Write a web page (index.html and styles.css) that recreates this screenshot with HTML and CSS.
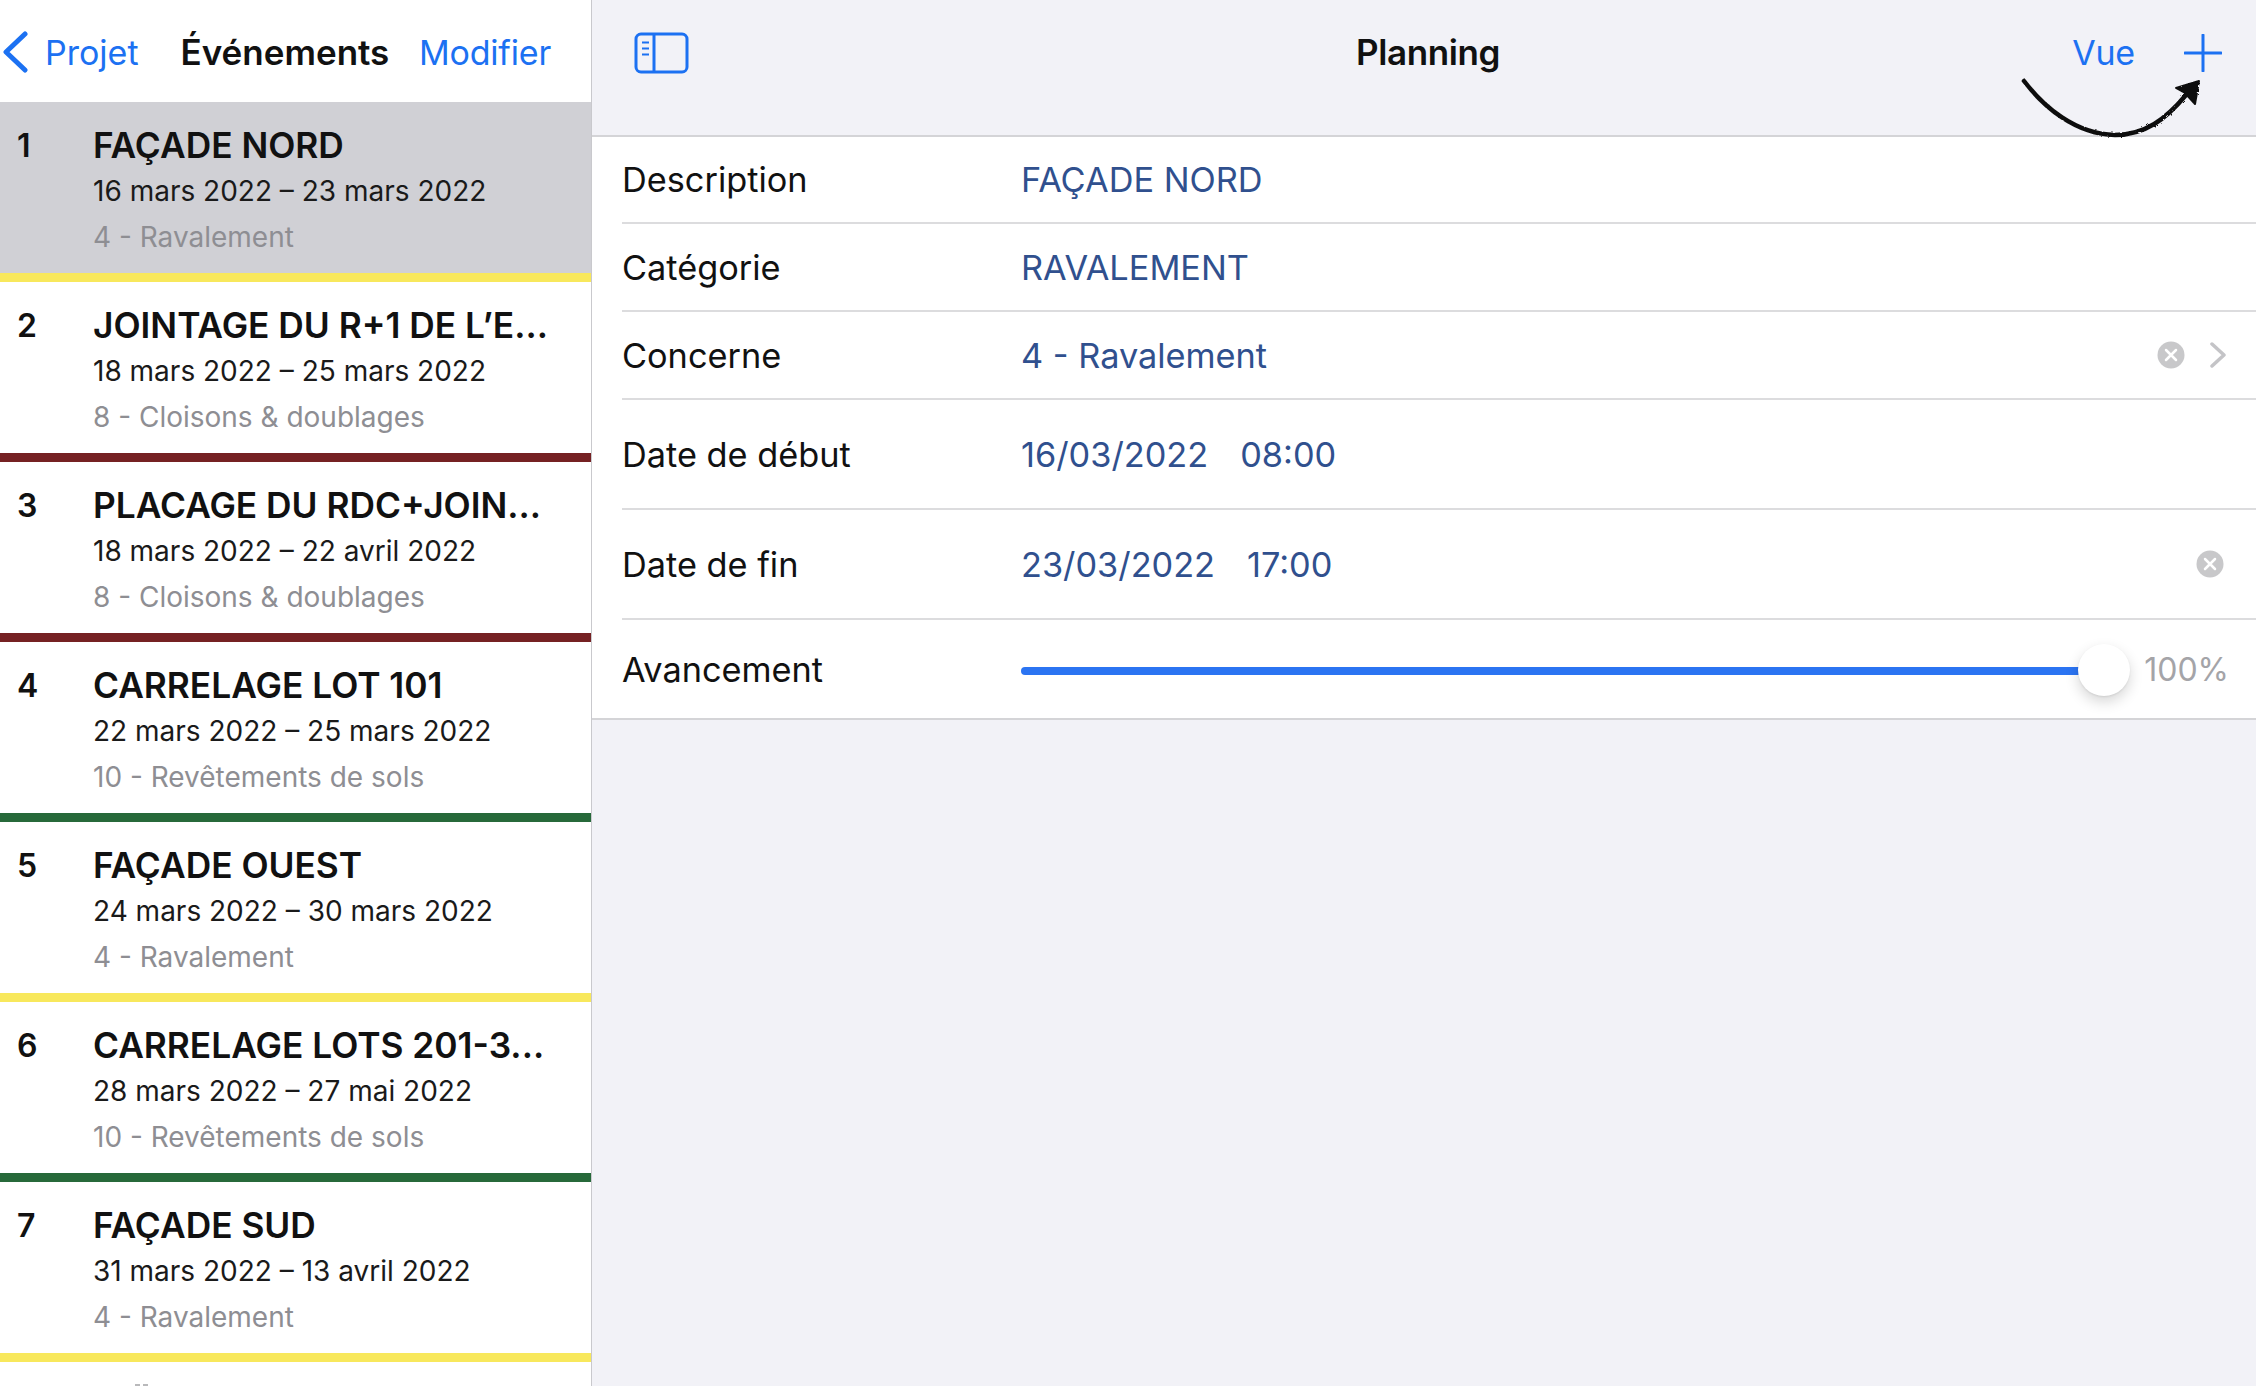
FILE: index.html
```html
<!DOCTYPE html>
<html lang="fr">
<head>
<meta charset="utf-8">
<title>Planning</title>
<link rel="stylesheet" href="styles.css">
</head>
<body>
<div class="app">
  <aside class="sidebar">
    <header class="side-head">
      <a class="back">
        <svg class="chev" width="28" height="42" viewBox="0 0 28 42"><path d="M25 3 L6 21 L25 39" fill="none" stroke="#1c71f2" stroke-width="5" stroke-linecap="round" stroke-linejoin="round"/></svg>
        <span>Projet</span>
      </a>
      <h1 class="side-title">Événements</h1>
      <a class="link">Modifier</a>
    </header>
    <ul class="events">
      <li class="event selected yellow"><span class="num">1</span><div class="info"><div class="name">FAÇADE NORD</div><div class="dates">16 mars 2022 – 23 mars 2022</div><div class="cat">4 - Ravalement</div></div></li>
      <li class="event maroon"><span class="num">2</span><div class="info"><div class="name">JOINTAGE DU R+1 DE L’E...</div><div class="dates">18 mars 2022 – 25 mars 2022</div><div class="cat">8 - Cloisons &amp; doublages</div></div></li>
      <li class="event maroon"><span class="num">3</span><div class="info"><div class="name">PLACAGE DU RDC+JOIN...</div><div class="dates">18 mars 2022 – 22 avril 2022</div><div class="cat">8 - Cloisons &amp; doublages</div></div></li>
      <li class="event green"><span class="num">4</span><div class="info"><div class="name">CARRELAGE LOT 101</div><div class="dates">22 mars 2022 – 25 mars 2022</div><div class="cat">10 - Revêtements de sols</div></div></li>
      <li class="event yellow"><span class="num">5</span><div class="info"><div class="name">FAÇADE OUEST</div><div class="dates">24 mars 2022 – 30 mars 2022</div><div class="cat">4 - Ravalement</div></div></li>
      <li class="event green"><span class="num">6</span><div class="info"><div class="name">CARRELAGE LOTS 201-3...</div><div class="dates">28 mars 2022 – 27 mai 2022</div><div class="cat">10 - Revêtements de sols</div></div></li>
      <li class="event yellow"><span class="num">7</span><div class="info"><div class="name">FAÇADE SUD</div><div class="dates">31 mars 2022 – 13 avril 2022</div><div class="cat">4 - Ravalement</div></div></li>
      <li class="peek"><span class="peek-dot"></span><span class="peek-dot"></span></li>
    </ul>
  </aside>
  <main class="detail">
    <header class="main-head">
      <svg class="side-icon" width="56" height="42" viewBox="0 0 56 42"><rect x="2" y="2" width="51" height="38" rx="5" fill="none" stroke="#1c71f2" stroke-width="3"/><path d="M20 2V40" stroke="#1c71f2" stroke-width="3"/><path d="M8 10.5h7M8 16.500h7M8 22.500h7" stroke="#1c71f2" stroke-width="2"/></svg>
      <h2 class="main-title">Planning</h2>
      <div class="actions">
        <a class="link">Vue</a>
        <svg class="plus" width="38" height="38" viewBox="0 0 38 38"><path d="M19 1V37M1 19H37" stroke="#1c71f2" stroke-width="3" stroke-linecap="round"/></svg>
      </div>
      <svg class="arrow" width="190" height="72" viewBox="0 0 190 72">
        <defs><filter id="rough" x="-5%" y="-10%" width="110%" height="120%"><feTurbulence type="fractalNoise" baseFrequency="0.35" numOctaves="2" seed="4"/><feDisplacementMap in="SourceGraphic" scale="2.500"/></filter></defs>
        <g filter="url(#rough)"><path d="M4 4 C24 30 55 57 95 58 C125 58 146 42 166 18" fill="none" stroke="#111" stroke-width="4.500" stroke-linecap="round"/><path d="M179 4 L156 11 L165 16 L175 27 Z" fill="#111" stroke="#111" stroke-width="2" stroke-linejoin="round"/></g>
      </svg>
    </header>
    <section class="form">
      <div class="row r-f"><span class="label">Description</span><span class="value">FAÇADE NORD</span></div>
      <div class="row r-s"><span class="label">Catégorie</span><span class="value">RAVALEMENT</span></div>
      <div class="row r-s"><span class="label">Concerne</span><span class="value">4 - Ravalement</span>
        <svg class="clear" width="28" height="28" viewBox="0 0 28 28"><circle cx="14" cy="14" r="13.500" fill="#c8c8ca"/><path d="M9 9L19 19M19 9L9 19" stroke="#fff" stroke-width="2.500" stroke-linecap="round"/></svg>
        <svg class="go" width="18" height="26" viewBox="0 0 18 26"><path d="M3 2L15 13L3 24" fill="none" stroke="#c4c4c7" stroke-width="3.500" stroke-linecap="round" stroke-linejoin="round"/></svg>
      </div>
      <div class="row r-l"><span class="label">Date de début</span><span class="value dates-val"><span>16/03/2022</span><span>08:00</span></span></div>
      <div class="row r-l"><span class="label">Date de fin</span><span class="value dates-val"><span>23/03/2022</span><span>17:00</span></span>
        <svg class="clear end" width="28" height="28" viewBox="0 0 28 28"><circle cx="14" cy="14" r="13.500" fill="#c8c8ca"/><path d="M9 9L19 19M19 9L9 19" stroke="#fff" stroke-width="2.500" stroke-linecap="round"/></svg>
      </div>
      <div class="row r-m last"><span class="label">Avancement</span>
        <div class="slider"><div class="track"></div><div class="knob"></div></div>
        <span class="pct">100%</span>
      </div>
    </section>
  </main>
</div>
</body>
</html>
```

FILE: styles.css
```css
* { box-sizing: border-box; }
html, body { margin: 0; padding: 0; height: 100%; overflow: hidden; }
body { font-family: Inter, "Liberation Sans", sans-serif; color: #111; background: #f2f2f7; }
.app { display: flex; width: 2256px; height: 1386px; overflow: hidden; }

.sidebar { width: 592px; flex: none; background: #fff; border-right: 1px solid #c9c9cd; overflow: hidden; }
.side-head { height: 102px; display: flex; align-items: center; padding: 2px 40px 0 0; }
.back { display: flex; align-items: center; gap: 17px; font-size: 34px; color: #1c71f2; }
.chev { display: block; }
.side-title { margin: 0 0 0 42px; font-size: 35px; font-weight: 600; color: #111; }
.link { font-size: 34px; color: #1c71f2; letter-spacing: -0.2px; }
.side-head .link { margin-left: auto; }

.events { list-style: none; margin: 0; padding: 0; }
.event { height: 180px; display: flex; background: #fff; border-bottom: 9px solid transparent; }
.event.selected { background: #d0d0d5; }
.event.yellow { border-bottom-color: #f8e85c; }
.event.maroon { border-bottom-color: #752123; }
.event.green { border-bottom-color: #27693a; }
.num { width: 93px; flex: none; padding: 24px 0 0 17px; font-size: 32px; line-height: 40px; font-weight: 600; }
.info { padding-top: 22px; min-width: 0; }
.name { font-size: 35.300px; line-height: 44px; font-weight: 600; white-space: nowrap; }
.dates { margin-top: 3px; font-size: 28px; line-height: 40px; white-space: nowrap; color: #1a1a1a; }
.cat { margin-top: 6px; font-size: 28px; line-height: 40px; white-space: nowrap; color: #8e8e93; }
.peek { display: flex; gap: 3px; padding: 22px 0 0 135px; }
.peek-dot { width: 5px; height: 2px; background: #b9b9bb; }

.detail { flex: 1; min-width: 0; }
.main-head { height: 137px; border-bottom: 2px solid #d4d4d7; display: flex; align-items: center; padding: 0 34px 30px 42px; position: relative; }
.side-icon { display: block; }
.main-title { position: absolute; left: 8px; right: 0; top: 30px; margin: 0; text-align: center; font-size: 35px; line-height: 44px; font-weight: 600; letter-spacing: -0.4px; }
.actions { margin-left: auto; display: flex; align-items: center; gap: 49px; }
.arrow { position: absolute; right: 46px; top: 77px; }

.form { background: #fff; border-bottom: 2px solid #d4d4d7; padding-left: 30px; }
.row { display: flex; align-items: center; border-bottom: 2px solid #dcdcde; padding-right: 30px; }
.row.last { border-bottom: 0; }
.r-f { height: 87px; }
.r-s { height: 88px; }
.r-l { height: 110px; }
.r-m { height: 98px; }
.label { width: 399px; flex: none; font-size: 34.300px; color: #111; }
.value { font-size: 34.300px; color: #30508e; }
.dates-val { display: flex; gap: 32px; }
.clear { margin-left: auto; margin-right: 24px; }
.clear.end { margin-right: 2px; }
.go { flex: none; margin-right: -1px; }

.slider { width: 1083px; height: 56px; margin-top: 4px; position: relative; display: flex; align-items: center; flex: none; }
.track { width: 100%; height: 8px; background: #2b74f2; border-radius: 4px; }
.knob { position: absolute; right: -26px; top: 1px; width: 52px; height: 52px; border-radius: 50%; background: #fff; box-shadow: 0 6px 14px rgba(0,0,0,.16), 0 1px 2px rgba(0,0,0,.08); }
.pct { margin-left: auto; margin-right: -3px; font-size: 32px; color: #a4a4a8; }
```
